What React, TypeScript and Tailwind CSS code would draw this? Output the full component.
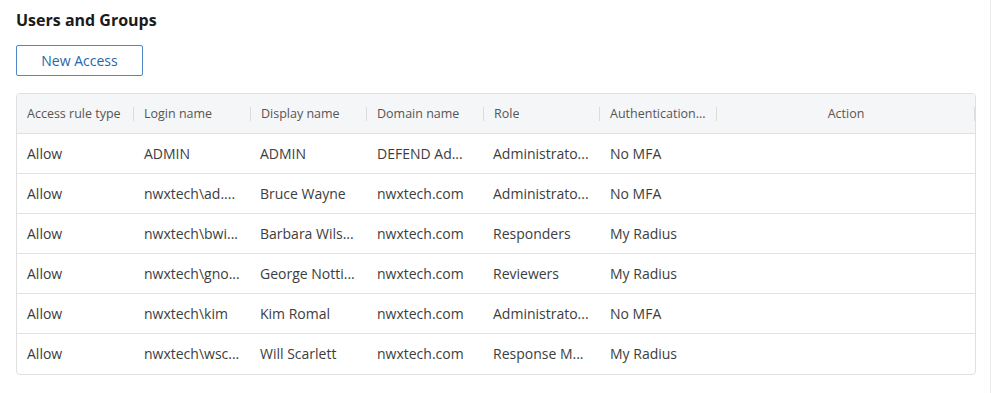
import React from 'react';

type Row = {
  type: string;
  login: string;
  display: string;
  domain: string;
  role: string;
  auth: string;
};

const rows: Row[] = [
  { type: 'Allow', login: 'ADMIN', display: 'ADMIN', domain: 'DEFEND Ad...', role: 'Administrato...', auth: 'No MFA' },
  { type: 'Allow', login: 'nwxtech\\ad....', display: 'Bruce Wayne', domain: 'nwxtech.com', role: 'Administrato...', auth: 'No MFA' },
  { type: 'Allow', login: 'nwxtech\\bwi...', display: 'Barbara Wils...', domain: 'nwxtech.com', role: 'Responders', auth: 'My Radius' },
  { type: 'Allow', login: 'nwxtech\\gno...', display: 'George Notti...', domain: 'nwxtech.com', role: 'Reviewers', auth: 'My Radius' },
  { type: 'Allow', login: 'nwxtech\\kim', display: 'Kim Romal', domain: 'nwxtech.com', role: 'Administrato...', auth: 'No MFA' },
  { type: 'Allow', login: 'nwxtech\\wsc...', display: 'Will Scarlett', domain: 'nwxtech.com', role: 'Response M...', auth: 'My Radius' },
];

const headers = ['Access rule type', 'Login name', 'Display name', 'Domain name', 'Role', 'Authentication...'];

const cols = 'grid grid-cols-[117px_117px_116px_117px_116px_117px_1fr]';

const HeaderCell: React.FC<{ label: string; center?: boolean }> = ({ label, center }) => (
  <div className={`relative flex items-center h-full pt-[2px] ${center ? 'px-[7px]' : 'pl-[10px] pr-[4px]'}`}>
    <span className={`whitespace-nowrap overflow-hidden ${center ? 'w-full text-center' : ''}`}>{label}</span>
    <span className="absolute right-0 top-[13px] h-[14px] w-px bg-[#dcdcdc]" />
  </div>
);

const App: React.FC = () => {
  return (
    <div
      className="w-[994px] h-[393px] bg-white text-[#333] relative"
      style={{ fontFamily: '"Open Sans", "Noto Sans", sans-serif' }}
    >
      <div className="absolute right-[3px] top-0 h-full w-px bg-[#ececec]" />
      <div className="pl-4 pr-[18px] pt-[9px]">
        <h1 className="text-[16px] leading-[22px] font-bold text-[#1a1a1a]">Users and Groups</h1>
        <button className="mt-[14px] w-[127px] h-[31px] border border-[#4f88c6] rounded-[2px] text-[14px] text-[#2766ad] bg-white">
          New Access
        </button>

        <div className="mt-[17px] border border-[#e0e0e0] rounded-[4px] overflow-hidden">
          <div className={`${cols} h-10 bg-[#f5f6f8] text-[12.5px] text-[#555] border-b border-[#e0e0e0]`}>
            {headers.map((h) => (
              <HeaderCell key={h} label={h} />
            ))}
            <HeaderCell label="Action" center />
          </div>
          {rows.map((r, i) => (
            <div
              key={i}
              className={`${cols} h-10 items-center pb-[1px] text-[14px] text-[#3d3d3d] ${i < rows.length - 1 ? 'border-b border-[#e3e3e3]' : ''}`}
            >
              <div className="pl-[10px] pr-[6px] truncate">{r.type}</div>
              <div className="pl-[10px] pr-[4px] truncate">{r.login}</div>
              <div className="pl-[9px] pr-[6px] truncate">{r.display}</div>
              <div className="pl-[10px] pr-[6px] truncate">{r.domain}</div>
              <div className="pl-[9px] pr-[6px] truncate">{r.role}</div>
              <div className="pl-[10px] pr-[6px] truncate">{r.auth}</div>
              <div />
            </div>
          ))}
        </div>
      </div>
    </div>
  );
};

export default App;
